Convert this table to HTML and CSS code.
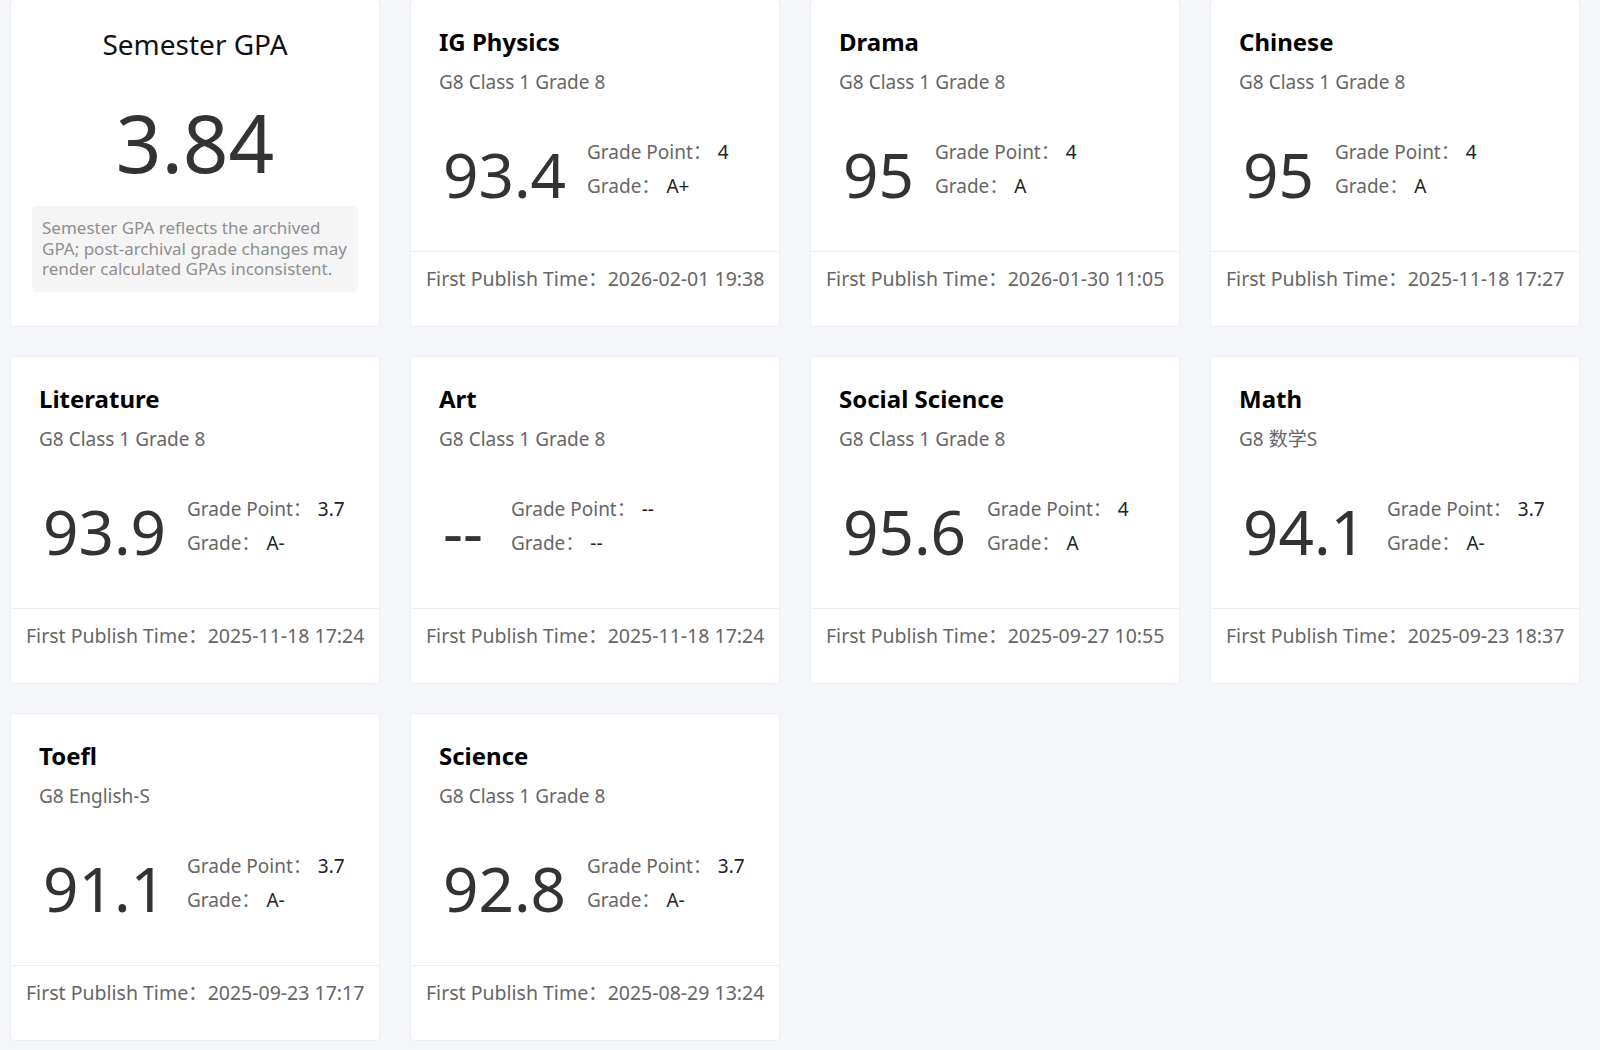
FILE: index.html
```html
<!DOCTYPE html>
<html lang="en">
<head>
<meta charset="utf-8">
<title>Grades</title>
<link rel="stylesheet" href="styles.css">
</head>
<body>
<div class="grid">
  <div class="card gpa-card">
    <div class="gpa-title">Semester GPA</div>
    <div class="gpa-value">3.84</div>
    <div class="gpa-note">Semester GPA reflects the archived GPA; post-archival grade changes may render calculated GPAs inconsistent.</div>
  </div>

  <div class="card">
    <div class="card-body">
      <div class="subject">IG Physics</div>
      <div class="class-name">G8 Class 1 Grade 8</div>
      <div class="score-row">
        <div class="score">93.4</div>
        <div class="info">
          <div class="info-line"><span class="label">Grade Point：</span><span class="value">4</span></div>
          <div class="info-line"><span class="label">Grade：</span><span class="value">A+</span></div>
        </div>
      </div>
    </div>
    <div class="card-footer"><span class="label">First Publish Time：</span>2026-02-01 19:38</div>
  </div>

  <div class="card">
    <div class="card-body">
      <div class="subject">Drama</div>
      <div class="class-name">G8 Class 1 Grade 8</div>
      <div class="score-row">
        <div class="score">95</div>
        <div class="info">
          <div class="info-line"><span class="label">Grade Point：</span><span class="value">4</span></div>
          <div class="info-line"><span class="label">Grade：</span><span class="value">A</span></div>
        </div>
      </div>
    </div>
    <div class="card-footer"><span class="label">First Publish Time：</span>2026-01-30 11:05</div>
  </div>

  <div class="card">
    <div class="card-body">
      <div class="subject">Chinese</div>
      <div class="class-name">G8 Class 1 Grade 8</div>
      <div class="score-row">
        <div class="score">95</div>
        <div class="info">
          <div class="info-line"><span class="label">Grade Point：</span><span class="value">4</span></div>
          <div class="info-line"><span class="label">Grade：</span><span class="value">A</span></div>
        </div>
      </div>
    </div>
    <div class="card-footer"><span class="label">First Publish Time：</span>2025-11-18 17:27</div>
  </div>

  <div class="card">
    <div class="card-body">
      <div class="subject">Literature</div>
      <div class="class-name">G8 Class 1 Grade 8</div>
      <div class="score-row">
        <div class="score">93.9</div>
        <div class="info">
          <div class="info-line"><span class="label">Grade Point：</span><span class="value">3.7</span></div>
          <div class="info-line"><span class="label">Grade：</span><span class="value">A-</span></div>
        </div>
      </div>
    </div>
    <div class="card-footer"><span class="label">First Publish Time：</span>2025-11-18 17:24</div>
  </div>

  <div class="card">
    <div class="card-body">
      <div class="subject">Art</div>
      <div class="class-name">G8 Class 1 Grade 8</div>
      <div class="score-row">
        <div class="score score-empty">--</div>
        <div class="info">
          <div class="info-line"><span class="label">Grade Point：</span><span class="value">--</span></div>
          <div class="info-line"><span class="label">Grade：</span><span class="value">--</span></div>
        </div>
      </div>
    </div>
    <div class="card-footer"><span class="label">First Publish Time：</span>2025-11-18 17:24</div>
  </div>

  <div class="card">
    <div class="card-body">
      <div class="subject">Social Science</div>
      <div class="class-name">G8 Class 1 Grade 8</div>
      <div class="score-row">
        <div class="score">95.6</div>
        <div class="info">
          <div class="info-line"><span class="label">Grade Point：</span><span class="value">4</span></div>
          <div class="info-line"><span class="label">Grade：</span><span class="value">A</span></div>
        </div>
      </div>
    </div>
    <div class="card-footer"><span class="label">First Publish Time：</span>2025-09-27 10:55</div>
  </div>

  <div class="card">
    <div class="card-body">
      <div class="subject">Math</div>
      <div class="class-name">G8 数学S</div>
      <div class="score-row">
        <div class="score">94.1</div>
        <div class="info">
          <div class="info-line"><span class="label">Grade Point：</span><span class="value">3.7</span></div>
          <div class="info-line"><span class="label">Grade：</span><span class="value">A-</span></div>
        </div>
      </div>
    </div>
    <div class="card-footer"><span class="label">First Publish Time：</span>2025-09-23 18:37</div>
  </div>

  <div class="card">
    <div class="card-body">
      <div class="subject">Toefl</div>
      <div class="class-name">G8 English-S</div>
      <div class="score-row">
        <div class="score">91.1</div>
        <div class="info">
          <div class="info-line"><span class="label">Grade Point：</span><span class="value">3.7</span></div>
          <div class="info-line"><span class="label">Grade：</span><span class="value">A-</span></div>
        </div>
      </div>
    </div>
    <div class="card-footer"><span class="label">First Publish Time：</span>2025-09-23 17:17</div>
  </div>

  <div class="card">
    <div class="card-body">
      <div class="subject">Science</div>
      <div class="class-name">G8 Class 1 Grade 8</div>
      <div class="score-row">
        <div class="score">92.8</div>
        <div class="info">
          <div class="info-line"><span class="label">Grade Point：</span><span class="value">3.7</span></div>
          <div class="info-line"><span class="label">Grade：</span><span class="value">A-</span></div>
        </div>
      </div>
    </div>
    <div class="card-footer"><span class="label">First Publish Time：</span>2025-08-29 13:24</div>
  </div>
</div>
</body>
</html>
```

FILE: styles.css
```css
html, body {
  margin: 0;
  padding: 0;
  background: #f5f6f9;
  font-family: "Noto Sans", "Noto Sans CJK SC", sans-serif;
  color: #333;
}

.grid {
  display: grid;
  grid-template-columns: repeat(4, 370px);
  grid-auto-rows: 328px;
  column-gap: 30px;
  row-gap: 29px;
  padding: 0 10px;
  margin-top: -1px;
}

.card {
  background: #fff;
  border: 1px solid #ebeef3;
  border-radius: 4px;
  box-sizing: border-box;
  display: flex;
  flex-direction: column;
  overflow: hidden;
}

.card-body {
  padding: 26px 28px 44px 28px;
}

.subject {
  font-size: 24px;
  font-weight: 700;
  line-height: 32px;
  color: #000;
}

.class-name {
  margin-top: 10px;
  font-size: 19px;
  line-height: 28px;
  color: #666;
}

.score-row {
  display: flex;
  align-items: flex-start;
  gap: 21px;
  margin-top: 39px;
  padding-left: 4px;
  height: 72px;
}

.score {
  font-size: 62px;
  line-height: 66px;
  margin-top: 6px;
  color: #333;
}

.score-empty {
  padding-right: 7px;
}

.info {
  display: flex;
  flex-direction: column;
}

.info-line {
  font-size: 19px;
  line-height: 34px;
  white-space: nowrap;
}

.label {
  color: #666;
}

.info-line .value {
  margin-left: 6px;
  color: #222;
}

.card-footer {
  flex: 1;
  border-top: 1px solid #ebeef3;
  padding: 13px 15px 0 15px;
  font-size: 19.5px;
  line-height: 28px;
  color: #666;
  white-space: nowrap;
}

/* Semester GPA card */
.gpa-card {
  align-items: center;
  padding: 0 21px;
}

.gpa-title {
  margin-top: 25px;
  font-size: 28px;
  line-height: 38px;
  color: #111;
}

.gpa-value {
  margin-top: 39px;
  font-size: 80px;
  line-height: 80px;
  color: #333;
}

.gpa-note {
  margin-top: 24px;
  align-self: stretch;
  background: #f5f5f6;
  border-radius: 5px;
  padding: 12px 10px;
  font-size: 17px;
  line-height: 20.5px;
  color: #8f8f8f;
}
```
